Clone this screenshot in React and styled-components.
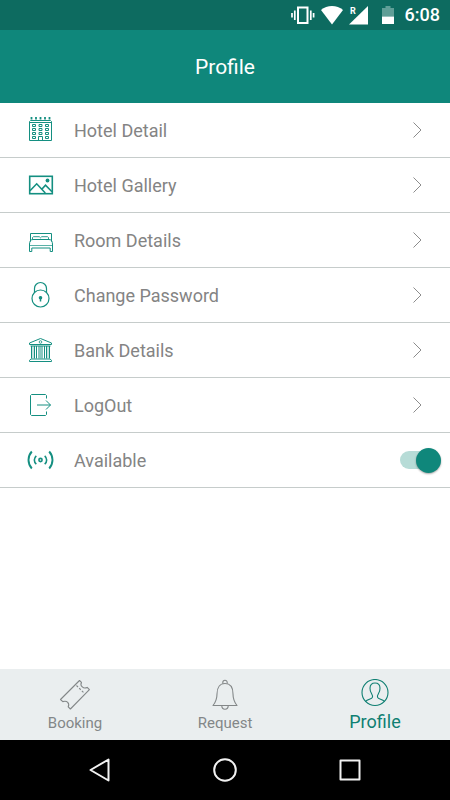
import React, { useState } from "react";
import styled, { createGlobalStyle } from "styled-components";

const GlobalStyle = createGlobalStyle`
  * {
    box-sizing: border-box;
  }
  body {
    margin: 0;
    background: white;
    font-family: Roboto, "Liberation Sans", sans-serif;
  }
  button {
    font-family: inherit;
    border: none;
    background: none;
    padding: 0;
    cursor: pointer;
  }
`;

const Screen = styled.div`
  display: flex;
  flex-direction: column;
  min-height: 100vh;
`;

const StatusBar = styled.div`
  display: flex;
  align-items: center;
  justify-content: flex-end;
  gap: 6px;
  height: 30px;
  padding-right: 10px;
  background: #0d6b60;
  color: white;
`;

const Time = styled.time`
  font-size: 18px;
  font-weight: 500;
  line-height: 30px;
`;

const Header = styled.header`
  display: flex;
  align-items: center;
  justify-content: center;
  height: 73px;
  padding-top: 1px;
  background: #0f877b;
  color: white;
`;

const Title = styled.h1`
  margin: 0;
  font-size: 21px;
  font-weight: 400;
`;

const List = styled.ul`
  flex: 1;
  margin: 0;
  padding: 0;
  list-style: none;
`;

const Item = styled.li`
  height: 55px;
  border-bottom: 1px solid #c6cccb;
`;

const Row = styled.button`
  display: flex;
  align-items: center;
  gap: 20px;
  width: 100%;
  height: 100%;
  padding: 0 26px;
  text-align: left;
`;

const ToggleRow = styled(Row)`
  padding-right: 9px;
  cursor: pointer;
`;

const RowIcon = styled.svg`
  flex: none;
  width: 28px;
  height: 28px;
  fill: none;
  stroke: #148f81;
  stroke-width: ${(props) => props.$weight || 1};
`;

const RowLabel = styled.span`
  flex: 1;
  color: #848484;
  font-size: 18px;
`;

const Chevron = styled.svg`
  width: 14px;
  height: 18px;
  fill: none;
  stroke: #8c8c8c;
`;

const Switch = styled.input`
  appearance: none;
  display: grid;
  align-items: center;
  width: 41px;
  height: 26px;
  margin: 0;
  cursor: pointer;

  &::before,
  &::after {
    content: "";
    grid-area: 1 / 1;
  }
  &::before {
    width: 36px;
    height: 18px;
    border-radius: 9px;
    background: ${(props) => (props.checked ? "#b7dcd7" : "#cccccc")};
  }
  &::after {
    justify-self: ${(props) => (props.checked ? "end" : "start")};
    width: 25px;
    height: 25px;
    border-radius: 50%;
    background: ${(props) => (props.checked ? "#0f877b" : "#f1f1f1")};
    box-shadow: 0 1px 2px rgba(0, 0, 0, 0.35);
  }
`;

const TabBar = styled.nav`
  display: grid;
  grid-template-columns: repeat(3, 1fr);
  height: 71px;
  background: #eaeeef;
`;

const Tab = styled.button`
  display: flex;
  flex-direction: column;
  align-items: center;
  padding-top: 10px;
  color: ${(props) => (props.$active ? "#0f7f72" : "#838788")};
  font-size: ${(props) => (props.$active ? "18px" : "15px")};
  line-height: ${(props) => (props.$active ? "22px" : "24px")};
`;

const TabIcon = styled.svg`
  width: 32px;
  height: 32px;
  fill: none;
  stroke: currentColor;
  stroke-width: 1.1;
  stroke-linejoin: round;
`;

const SystemBar = styled.div`
  display: grid;
  grid-template-columns: repeat(3, 1fr);
  height: 60px;
  padding: 0 37px;
  background: black;
`;

const SystemButton = styled.button`
  display: flex;
  align-items: center;
  justify-content: center;
`;

const SystemIcon = styled.svg`
  width: 26px;
  height: 26px;
  fill: none;
  stroke: #f2f2f2;
  stroke-width: 2;
  stroke-linejoin: round;
`;

const HotelIcon = () => (
  <RowIcon viewBox="0 0 28 28">
    <path d="M3.5 24.5V5.5l1-1h20l1 1v19zM3.5 6.5h22" />
    <path d="M5.5 1v3M10 1v3M14.5 1v3M19 1v3M23.5 1v3" strokeWidth="1.8" strokeDasharray="2 0.4" />
    {[8, 12, 16, 20].map((y) => (
      <path key={y} d={`M6.500 ${y}.5h3v2h-3zM19.500 ${y}.5h3v2h-3z`} />
    ))}
    {[8, 12, 16].map((y) => (
      <path key={y} d={`M13 ${y}.5h3v2h-3z`} />
    ))}
    <path d="M12.5 24.5v-4h4v4" />
  </RowIcon>
);

const GalleryIcon = () => (
  <RowIcon viewBox="0 0 28 28" $weight={1.6}>
    <rect x="3.7" y="5.3" width="22.600" height="17.400" />
    <path d="M4 19.8l6.7-7 8.6 9.2M15.8 18.2l3.7-4 6.5 6.6" />
    <circle cx="21.500" cy="9.500" r="1.900" fill="#148f81" stroke="none" />
  </RowIcon>
);

const BedIcon = () => (
  <RowIcon viewBox="0 0 28 28">
    <path d="M4.500 15.500V7.500h21v8" />
    <path d="M6.500 13v-1.500l1-.8h5.800l1.200 1.100 1.200-1.100h5.800l1 .8V13" strokeWidth="0.9" />
    <path d="M3.500 18.500c0-3 1-5 3.500-5h16c2.500 0 3.500 2 3.500 5" />
    <path d="M3.500 18v7.500h2.300v-3.500h18.400v3.500h2.300V18" />
    <path d="M3.500 19.500h23" strokeWidth="0.7" />
  </RowIcon>
);

const LockIcon = () => (
  <RowIcon viewBox="0 0 28 28" $weight={1.2}>
    <circle cx="14.5" cy="17.5" r="8.5" />
    <path d="M8.5 11.500V7.500a6 6 0 0 1 12 0v4" />
    <circle cx="14.5" cy="16.800" r="1.200" fill="#148f81" />
    <path d="M14.5 17v3.500" strokeWidth="1.500" />
  </RowIcon>
);

const BankIcon = () => (
  <RowIcon viewBox="0 0 28 28">
    <path d="M3.5 8.5V7l11-4.5 11 4.5v1.500z" />
    <circle cx="14.5" cy="6" r="1.3" strokeWidth="0.8" />
    <path d="M4.500 10h20M4 25.500h21.500v-1.200L24 23H5l-1.500 1.300v1.200z" />
    <path d="M5.5 10v12.5M8.5 10v12.5M10.5 10v12.5M13 10v12.5M16 10v12.5M18.5 10v12.5M20.5 10v12.5M23.5 10v12.5" />
    <path d="M7 10v12.5M14.5 10v12.5M22 10v12.5" strokeWidth="0.5" />
  </RowIcon>
);

const LogoutIcon = () => (
  <RowIcon viewBox="0 0 28 28">
    <path d="M20.5 7.5v-3l-1-1h-14l-1 1v19l1 1h14l1-1v-3" />
    <path d="M11 14h13.5M20 9.5l4.5 4.5-4.5 4.5" />
  </RowIcon>
);

const SignalIcon = () => (
  <RowIcon viewBox="0 0 28 28" $weight={1.6}>
    <circle cx="14.5" cy="14" r="1.600" />
    <path d="M10.300 9.800c-2.600 2.300-2.600 6.100 0 8.400M18.700 9.800c2.600 2.300 2.600 6.100 0 8.400" />
    <path d="M5.8 5.500c-4.400 5-4.400 12 0 17M23.200 5.500c4.400 5 4.400 12 0 17" strokeWidth="1.9" />
  </RowIcon>
);

const BookingIcon = () => (
  <TabIcon viewBox="0 0 32 32">
    <path d="M1.5 20.5l19-19 2 1.800c-.9 1.800-.5 3.600.8 4.600 1.300 1.200 3.300 1.200 4.900.5l2.200 2.300-19 19.300-2.200-2.200c.8-1.700.7-3.300-.5-4.500s-3-1.200-4.900-.7z" />
    <path d="M17.500 6.500L25 14" strokeDasharray="2.2 1.6" />
  </TabIcon>
);

const RequestIcon = () => (
  <TabIcon viewBox="0 0 32 32">
    <path d="M4 26.500c2.800-3.500 4-6.500 4-11.500 0-6.500 3-10.500 8-10.500s8 4 8 10.500c0 5 1.200 8 4 11.500z" />
    <path d="M13.800 4.800V3.500a2.200 2.200 0 0 1 4.400 0v1.300M12.800 26.800c0 4.500 6.400 4.500 6.400 0" />
  </TabIcon>
);

const ProfileIcon = () => (
  <TabIcon viewBox="0 0 32 32">
    <circle cx="16" cy="13.500" r="13" />
    <path d="M6.500 22.500c2.500-2.300 6-2.200 6.800-4 .6-1.500-.1-3-.9-4.300-1-1.500-1.400-3.200-1.400-5 0-3.500 1.800-5.200 5-5.200s5 1.700 5 5.200c0 1.800-.4 3.500-1.400 5-.8 1.300-1.500 2.800-.9 4.300.8 1.800 4.300 1.700 6.800 4" />
  </TabIcon>
);

const items = [
  { label: "Hotel Detail", Icon: HotelIcon },
  { label: "Hotel Gallery", Icon: GalleryIcon },
  { label: "Room Details", Icon: BedIcon },
  { label: "Change Password", Icon: LockIcon },
  { label: "Bank Details", Icon: BankIcon },
  { label: "LogOut", Icon: LogoutIcon },
];

const tabs = [
  { label: "Booking", Icon: BookingIcon },
  { label: "Request", Icon: RequestIcon },
  { label: "Profile", Icon: ProfileIcon },
];

const App = () => {
  const [available, setAvailable] = useState(true);
  const [tab, setTab] = useState("Profile");

  return (
    <Screen>
      <GlobalStyle />
      <StatusBar>
        <svg width="24" height="20" viewBox="0 0 24 20" fill="none" stroke="white">
          <rect x="7" y="2.500" width="9.500" height="15.500" strokeWidth="2" />
          <path d="M3.800 5.500v9.500M19.800 5.500v9.500" strokeWidth="1.700" />
          <path d="M1 8v4.500M22.600 8v4.500" strokeWidth="1.700" />
        </svg>
        <svg width="22" height="20" viewBox="0 0 22 20">
          <path d="M11 19.500L0 5C6-.5 16-.5 22 5z" fill="white" />
        </svg>
        <svg width="20" height="20" viewBox="0 0 20 20">
          <path d="M0 19.500L19 1v18.500z" fill="white" />
          <text x="1" y="9" fontSize="9" fontWeight="700" fill="white">
            R
          </text>
        </svg>
        <svg width="24" height="20" viewBox="0 0 24 20">
          <path d="M7 3h3.500V1h5v2H19v8.500H7z" fill="#5f9f97" />
          <path d="M7 11.500h12V19H7z" fill="white" />
        </svg>
        <Time>6:08</Time>
      </StatusBar>
      <Header>
        <Title>Profile</Title>
      </Header>
      <List>
        {items.map(({ label, Icon }) => (
          <Item key={label}>
            <Row type="button">
              <Icon />
              <RowLabel>{label}</RowLabel>
              <Chevron viewBox="0 0 14 18">
                <path d="M3.5 1.5L11 9l-7.500 7.500" />
              </Chevron>
            </Row>
          </Item>
        ))}
        <Item>
          <ToggleRow as="label" htmlFor="available">
            <SignalIcon />
            <RowLabel>Available</RowLabel>
            <Switch
              id="available"
              type="checkbox"
              checked={available}
              onChange={(e) => setAvailable(e.target.checked)}
            />
          </ToggleRow>
        </Item>
      </List>
      <TabBar>
        {tabs.map(({ label, Icon }) => (
          <Tab
            key={label}
            type="button"
            $active={tab === label}
            onClick={() => setTab(label)}
          >
            <Icon />
            {label}
          </Tab>
        ))}
      </TabBar>
      <SystemBar>
        <SystemButton type="button" aria-label="Back">
          <SystemIcon viewBox="0 0 26 26">
            <path d="M3.5 13l18-10.500v21z" />
          </SystemIcon>
        </SystemButton>
        <SystemButton type="button" aria-label="Home">
          <SystemIcon viewBox="0 0 26 26">
            <circle cx="13" cy="13" r="10.800" />
          </SystemIcon>
        </SystemButton>
        <SystemButton type="button" aria-label="Recent apps">
          <SystemIcon viewBox="0 0 26 26">
            <rect x="3.5" y="3.5" width="19" height="19" />
          </SystemIcon>
        </SystemButton>
      </SystemBar>
    </Screen>
  );
};

export default App;
